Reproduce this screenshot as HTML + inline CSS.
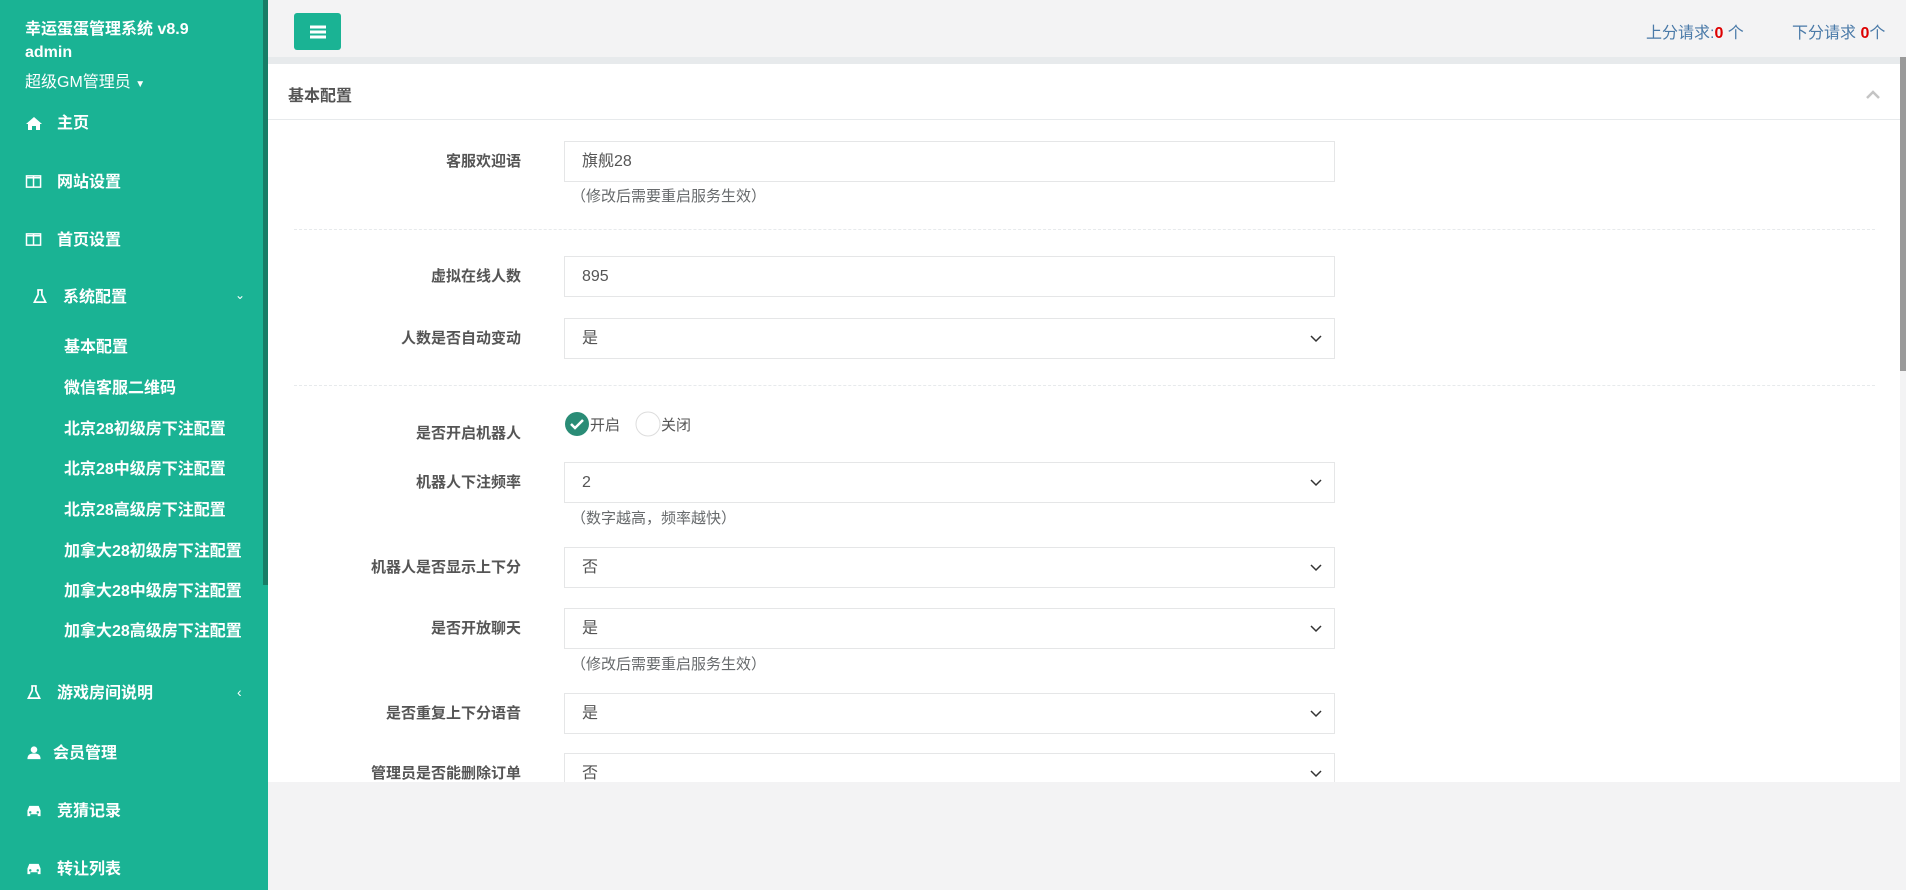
<!DOCTYPE html>
<html><head><meta charset="utf-8"><style>
*{box-sizing:border-box;margin:0;padding:0}
body{width:1906px;height:890px;overflow:hidden;background:#f3f3f4;font-family:"Liberation Sans","Noto Sans CJK SC",sans-serif;position:relative}
.side{position:absolute;left:0;top:0;width:268px;height:890px;background:#1ab394;color:#fff}
.side .strip{position:absolute;left:263px;top:0;width:5px;height:585px;background:#177d66}
.t{position:absolute;white-space:nowrap}
.side .m{position:absolute;left:25px;font-size:16px;font-weight:bold;white-space:nowrap;line-height:20px}
.side .s{position:absolute;left:64px;font-size:16px;font-weight:bold;white-space:nowrap;line-height:20px}
.ic{display:inline-block;width:18px;margin-right:14px;vertical-align:-2px}
.top{position:absolute;left:268px;top:0;width:1638px;height:57px;background:#f3f3f4}
.btn{position:absolute;left:294px;top:13px;width:47px;height:37px;background:#1ab394;border-radius:3px}
.panel{position:absolute;left:268px;top:63px;width:1632px;height:719px;background:#fff;border-top:1px solid #e7eaec}
.lab{position:absolute;right:1379px;font-size:15px;font-weight:bold;color:#555;white-space:nowrap}
.inp{position:absolute;left:296px;width:771px;height:41px;border:1px solid #e5e6e7;font-size:16px;color:#555;padding:0 17px;display:flex;align-items:center;line-height:20px}
.inp svg{position:absolute;right:12px;top:16px}
.help{position:absolute;left:303px;font-size:15px;color:#676a6c}
.dash{position:absolute;left:26px;width:1581px;border-top:1px dashed #e7eaec}
</style></head><body>
<div class="side">
<div class="strip"></div>
<div class="t" style="left:25px;top:15px;font-size:16px;font-weight:bold">幸运蛋蛋管理系统 v8.9</div>
<div class="t" style="left:25px;top:44px;font-size:16px;font-weight:bold">admin</div>
<div class="t" style="left:25px;top:68px;font-size:16px">超级GM管理员 <span style="font-size:10px">▼</span></div>
<div class="m" style="top:114px"><svg class="ic" viewBox="0 0 18 14" height="14"><path d="M9 1L1 8h2v6h4v-4h4v4h4V8h2z" fill="#fff"/></svg>主页</div>
<div class="m" style="top:173px"><svg class="ic" viewBox="0 0 18 16" height="15"><rect x="1" y="2" width="15" height="12" fill="none" stroke="#fff" stroke-width="1.6"/><path d="M8.5 2v12M1 4h15" stroke="#fff" stroke-width="1.6"/></svg>网站设置</div>
<div class="m" style="top:231px"><svg class="ic" viewBox="0 0 18 16" height="15"><rect x="1" y="2" width="15" height="12" fill="none" stroke="#fff" stroke-width="1.6"/><path d="M8.5 2v12M1 4h15" stroke="#fff" stroke-width="1.6"/></svg>首页设置</div>
<div class="m" style="top:288px;left:31px"><svg class="ic" viewBox="0 0 16 16" height="15"><path d="M5 1h6M6 1v5L2 14h12L10 6V1" fill="none" stroke="#fff" stroke-width="1.8"/></svg>系统配置</div>
<div class="t" style="left:235px;top:288px;font-size:12px">⌄</div>
<div class="s" style="top:338px">基本配置</div>
<div class="s" style="top:379px">微信客服二维码</div>
<div class="s" style="top:420px">北京28初级房下注配置</div>
<div class="s" style="top:460px">北京28中级房下注配置</div>
<div class="s" style="top:501px">北京28高级房下注配置</div>
<div class="s" style="top:542px">加拿大28初级房下注配置</div>
<div class="s" style="top:582px">加拿大28中级房下注配置</div>
<div class="s" style="top:622px">加拿大28高级房下注配置</div>
<div class="m" style="top:684px"><svg class="ic" viewBox="0 0 16 16" height="15"><path d="M5 1h6M6 1v5L2 14h12L10 6V1" fill="none" stroke="#fff" stroke-width="1.8"/></svg>游戏房间说明</div>
<div class="t" style="left:237px;top:684px;font-size:14px">‹</div>
<div class="m" style="top:744px"><svg class="ic" viewBox="0 0 16 16" height="15" style="margin-right:10px"><circle cx="8" cy="5" r="3.5" fill="#fff"/><path d="M1 15c0-5 3-6 7-6s7 1 7 6z" fill="#fff"/></svg>会员管理</div>
<div class="m" style="top:802px"><svg class="ic" viewBox="0 0 18 16" height="15"><path d="M4 3h10l2 5v6h-3v-2H5v2H2V8z" fill="#fff"/><circle cx="5" cy="10" r="1.3" fill="#1ab394"/><circle cx="13" cy="10" r="1.3" fill="#1ab394"/></svg>竞猜记录</div>
<div class="m" style="top:860px"><svg class="ic" viewBox="0 0 18 16" height="15"><path d="M4 3h10l2 5v6h-3v-2H5v2H2V8z" fill="#fff"/><circle cx="5" cy="10" r="1.3" fill="#1ab394"/><circle cx="13" cy="10" r="1.3" fill="#1ab394"/></svg>转让列表</div>
</div>
<div class="top"></div>
<div style="position:absolute;left:268px;top:57px;width:1638px;height:6px;background:#e7eaec"></div>
<div class="btn"><svg width="47" height="37"><path d="M16 14h16M16 19h16M16 24h16" stroke="#fff" stroke-width="3"/></svg></div>
<div class="t" style="left:1646px;top:19px;font-size:16px;color:#4a7aa8">上分请求:<b style="color:#d00">0</b> 个</div>
<div class="t" style="left:1792px;top:19px;font-size:16px;color:#4a7aa8">下分请求 <b style="color:#d00">0</b>个</div>
<div style="position:absolute;left:1900px;top:57px;width:6px;height:314px;background:#9a9a9a"></div>
<div class="panel">
<div class="t" style="left:20px;top:18px;font-size:16px;font-weight:bold;color:#555">基本配置</div>
<svg style="position:absolute;left:1598px;top:26px" width="14" height="9"><path d="M1 8l6-6 6 6" fill="none" stroke="#c4c4c4" stroke-width="2.5"/></svg>
<div style="position:absolute;left:0;top:55px;width:1632px;border-top:1px solid #e7eaec"></div>

<div class="lab" style="top:86px">客服欢迎语</div>
<div class="inp" style="top:77px">旗舰28</div>
<div class="help" style="top:121px">（修改后需要重启服务生效）</div>
<div class="dash" style="top:165px"></div>

<div class="lab" style="top:201px">虚拟在线人数</div>
<div class="inp" style="top:192px">895</div>
<div class="lab" style="top:263px">人数是否自动变动</div>
<div class="inp" style="top:254px">是<svg width="12" height="8"><path d="M1 1l5 5 5-5" fill="none" stroke="#333" stroke-width="1.5"/></svg></div>
<div class="dash" style="top:321px"></div>

<div class="lab" style="top:358px">是否开启机器人</div>
<svg style="position:absolute;left:296px;top:347px" width="26" height="26"><circle cx="13" cy="13" r="12" fill="#2a8c76"/><path d="M7 13l4 4 8-8" fill="none" stroke="#fff" stroke-width="2.5"/></svg>
<div class="t" style="left:322px;top:350px;font-size:15px;color:#555">开启</div>
<svg style="position:absolute;left:367px;top:347px" width="26" height="26"><circle cx="13" cy="13" r="12" fill="#fff" stroke="#ddd"/></svg>
<div class="t" style="left:393px;top:350px;font-size:15px;color:#555">关闭</div>

<div class="lab" style="top:407px">机器人下注频率</div>
<div class="inp" style="top:398px">2<svg width="12" height="8"><path d="M1 1l5 5 5-5" fill="none" stroke="#333" stroke-width="1.5"/></svg></div>
<div class="help" style="top:443px">（数字越高，频率越快）</div>
<div class="lab" style="top:492px">机器人是否显示上下分</div>
<div class="inp" style="top:483px">否<svg width="12" height="8"><path d="M1 1l5 5 5-5" fill="none" stroke="#333" stroke-width="1.5"/></svg></div>
<div class="lab" style="top:553px">是否开放聊天</div>
<div class="inp" style="top:544px">是<svg width="12" height="8"><path d="M1 1l5 5 5-5" fill="none" stroke="#333" stroke-width="1.5"/></svg></div>
<div class="help" style="top:589px">（修改后需要重启服务生效）</div>
<div class="lab" style="top:638px">是否重复上下分语音</div>
<div class="inp" style="top:629px">是<svg width="12" height="8"><path d="M1 1l5 5 5-5" fill="none" stroke="#333" stroke-width="1.5"/></svg></div>
<div class="lab" style="top:698px">管理员是否能删除订单</div>
<div class="inp" style="top:689px;height:41px">否<svg width="12" height="8"><path d="M1 1l5 5 5-5" fill="none" stroke="#333" stroke-width="1.5"/></svg></div>
</div>
<div style="position:absolute;left:268px;top:782px;width:1638px;height:108px;background:#f3f3f4"></div>
</body></html>
